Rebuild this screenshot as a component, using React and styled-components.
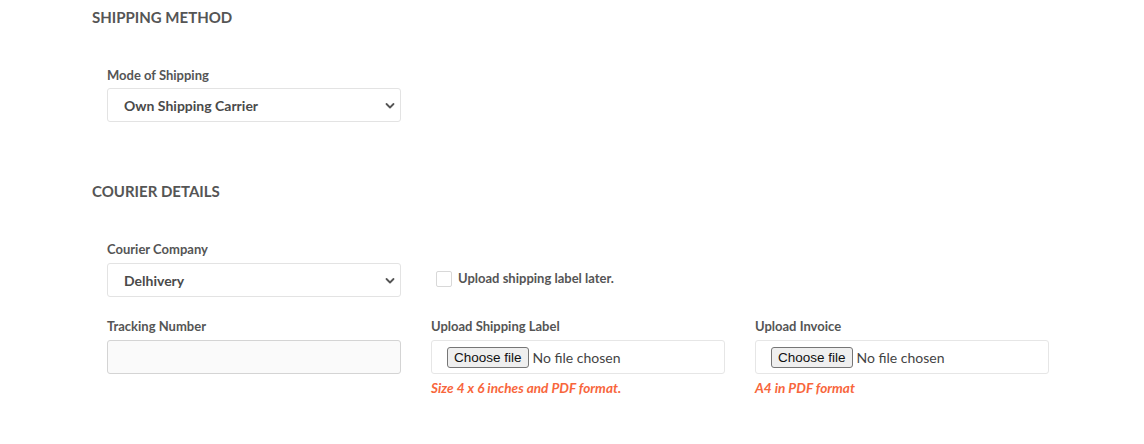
import React from "react";
import styled, { createGlobalStyle } from "styled-components";

const Global = createGlobalStyle`
  html, body { margin: 0; padding: 0; background: #fff; }
  body { font-family: Lato, "Open Sans", sans-serif; color: #555; }
  * { box-sizing: border-box; }
`;

const Page = styled.div`
  padding: 7px 0 0 92px;
  width: 1144px;
`;

const Heading = styled.h3`
  margin: 0;
  font-size: 15px;
  line-height: 20px;
  font-weight: 700;
  color: #555;
  text-transform: uppercase;
  margin-top: ${(p) => p.$top || 0}px;
`;

const Row = styled.div`
  display: grid;
  grid-template-columns: repeat(3, 324px);
  margin-top: ${(p) => p.$top || 0}px;
`;

const Col = styled.div`
  padding: 0 15px;
  display: flex;
  flex-direction: column;
`;

const Label = styled.label`
  font-size: 13px;
  line-height: 16px;
  font-weight: 700;
  color: #555;
  margin-bottom: ${(p) => p.$gap || 6}px;
`;

const SelectWrap = styled.div`
  position: relative;
  height: 34px;
  border: 1px solid #e3e3e3;
  border-radius: 3px;
  background: #fff;
  display: flex;
  align-items: center;
  padding-left: 16px;
  font-size: 14px;
  font-weight: 700;
  color: #4a4a4a;
`;

const Chevron = styled.svg`
  position: absolute;
  right: 5px;
  top: 13px;
`;

const TextInput = styled.input`
  height: 34px;
  border: 1px solid #d4d4d4;
  border-radius: 3px;
  background: #fafafa;
  padding: 0 12px;
  font-family: inherit;
  font-size: 14px;
  outline: none;
`;

const FileBox = styled.div`
  height: 34px;
  border: 1px solid #e6e6e6;
  border-radius: 3px;
  background: #fff;
  display: flex;
  align-items: center;
  padding-left: 15px;
  gap: 4px;
`;

const FileButton = styled.span`
  display: inline-flex;
  align-items: center;
  height: 21px;
  padding: 0 6px;
  border: 1px solid #767676;
  border-radius: 3px;
  background: #efefef;
  font-family: "Liberation Sans", Arial, sans-serif;
  font-size: 13.5px;
  color: #111;
`;

const FileText = styled.span`
  font-size: 14px;
  color: #444;
`;

const Hint = styled.div`
  margin-top: 6px;
  font-size: 13.6px;
  line-height: 16px;
  font-weight: 700;
  font-style: italic;
  color: #f8663c;
`;

const CheckRow = styled.div`
  display: flex;
  align-items: center;
  height: 34px;
  margin-top: 22px;
  padding-left: 5px;
  gap: 6px;
  font-size: 13px;
  line-height: 16px;
  font-weight: 700;
  color: #555;
`;

const CheckText = styled.span`
  margin-top: -4px;
`;

const Box = styled.span`
  width: 16px;
  height: 16px;
  border: 1px solid #d8d8d8;
  border-radius: 2px;
  background: #fff;
  margin-top: -2px;
`;

const Select = ({ value }) => (
  <SelectWrap>
    {value}
    <Chevron width="10" height="8" viewBox="0 0 10 8">
      <path d="M1.5 2 L5 5.5 L8.5 2" fill="none" stroke="#555" strokeWidth="1.8" strokeLinecap="round" strokeLinejoin="round" />
    </Chevron>
  </SelectWrap>
);

const File = () => (
  <FileBox>
    <FileButton>Choose file</FileButton>
    <FileText>No file chosen</FileText>
  </FileBox>
);

export default function App() {
  return (
    <>
      <Global />
      <Page>
        <Heading>Shipping Method</Heading>
        <Row $top={40}>
          <Col>
            <Label $gap={5}>Mode of Shipping</Label>
            <Select value="Own Shipping Carrier" />
          </Col>
        </Row>
        <Heading $top={59}>Courier Details</Heading>
        <Row $top={40}>
          <Col>
            <Label>Courier Company</Label>
            <Select value="Delhivery" />
          </Col>
          <Col>
            <CheckRow>
              <Box />
              <CheckText>Upload shipping label later.</CheckText>
            </CheckRow>
          </Col>
        </Row>
        <Row $top={21}>
          <Col>
            <Label>Tracking Number</Label>
            <TextInput />
          </Col>
          <Col>
            <Label>Upload Shipping Label</Label>
            <File />
            <Hint>Size 4 x 6 inches and PDF format.</Hint>
          </Col>
          <Col>
            <Label>Upload Invoice</Label>
            <File />
            <Hint>A4 in PDF format</Hint>
          </Col>
        </Row>
      </Page>
    </>
  );
}
